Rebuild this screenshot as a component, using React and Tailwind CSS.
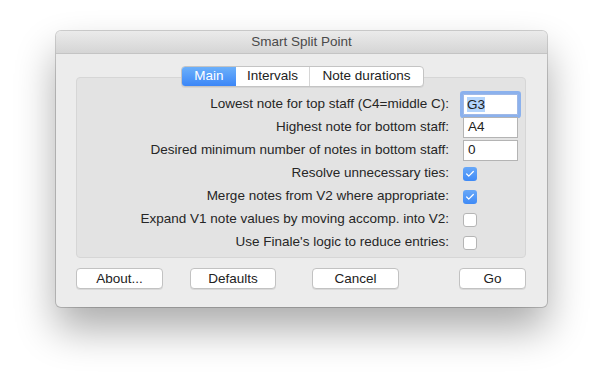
import { Check } from 'lucide-react'

const font = { fontFamily: '"Liberation Sans", Arial, sans-serif' }

const TextRow = ({ label, value, focused }) => (
  <div className="flex items-center h-[23px]">
    <div className="w-[386px] text-right pr-[14px] text-[13.5px] text-[#262626] whitespace-nowrap">{label}</div>
    {focused ? (
      <div className="w-[55px] h-[21px] bg-white border border-[#9fb8e6] rounded-[1px] shadow-[0_0_0_3px_rgba(110,160,240,0.75)] flex items-center px-[3px]">
        <span className="text-[13.5px] text-[#222] bg-[#b3d4fc] leading-[15px]">{value}</span>
      </div>
    ) : (
      <div className="w-[55px] h-[21px] bg-white border border-[#b4b4b4] flex items-center px-[4px] text-[13.5px] text-[#222]">
        {value}
      </div>
    )}
  </div>
)

const CheckRow = ({ label, checked }) => (
  <div className="flex items-center h-[23px]">
    <div className="w-[386px] text-right pr-[14px] text-[13.5px] text-[#262626] whitespace-nowrap">{label}</div>
    {checked ? (
      <div className="w-[14px] h-[14px] rounded-[3px] bg-gradient-to-b from-[#68a8f8] to-[#3f8af6] flex items-center justify-center">
        <Check className="w-[10px] h-[10px] text-white" strokeWidth={3} />
      </div>
    ) : (
      <div className="w-[14px] h-[14px] rounded-[3px] bg-white border border-[#b5b5b5]" />
    )}
  </div>
)

const Button = ({ children, width }) => (
  <button className={`${width} h-[21px] bg-white border border-[#c2c2c2] rounded-[4px] shadow-[0_1px_0_rgba(0,0,0,0.08)] text-[13.5px] text-[#222] leading-none`}>
    {children}
  </button>
)

export default function App() {
  return (
    <div className="w-[603px] h-[388px] bg-white pt-[31px] flex justify-center" style={font}>
      <div className="w-[491px] h-[276px] bg-[#ececec] rounded-[5px] shadow-[0_0_0_1px_rgba(0,0,0,0.18),0_22px_40px_rgba(0,0,0,0.33)] flex flex-col overflow-hidden">
        {/* Title bar */}
        <div className="h-[23px] bg-gradient-to-b from-[#ebebeb] to-[#d5d5d5] border-b border-[#c4c4c4] flex items-center justify-center text-[13.5px] text-[#4a4a4a]">
          Smart Split Point
        </div>

        <div className="flex flex-col px-[20px] pr-[21px] pt-[12px]">
          {/* Tabs */}
          <div className="flex justify-center relative z-10 mb-[-10px] pl-[3px]">
            <div className="flex h-[21px] rounded-[4px] border border-[#c4c4c4] bg-white shadow-[0_1px_0_rgba(0,0,0,0.06)] overflow-hidden text-[13.5px]">
              <div className="w-[54px] bg-gradient-to-b from-[#6cb0fa] to-[#3c86f7] text-white flex items-center justify-center">Main</div>
              <div className="w-[74px] border-r border-[#d6d6d6] flex items-center justify-center text-[#222]">Intervals</div>
              <div className="w-[113px] flex items-center justify-center text-[#222]">Note durations</div>
            </div>
          </div>

          {/* Tab box */}
          <div className="h-[181px] bg-[#e3e3e3] border border-[#d6d6d6] rounded-[4px] pt-[15px]">
            <TextRow label="Lowest note for top staff (C4=middle C):" value="G3" focused />
            <TextRow label="Highest note for bottom staff:" value="A4" />
            <TextRow label="Desired minimum number of notes in bottom staff:" value="0" />
            <CheckRow label="Resolve unnecessary ties:" checked />
            <CheckRow label="Merge notes from V2 where appropriate:" checked />
            <CheckRow label="Expand V1 note values by moving accomp. into V2:" />
            <CheckRow label="Use Finale's logic to reduce entries:" />
          </div>

          {/* Buttons */}
          <div className="flex items-center mt-[10px]">
            <Button width="w-[87px]">About...</Button>
            <div className="w-[27px]" />
            <Button width="w-[86px]">Defaults</Button>
            <div className="w-[36px]" />
            <Button width="w-[87px]">Cancel</Button>
            <div className="flex-1" />
            <Button width="w-[67px]">Go</Button>
          </div>
        </div>
      </div>
    </div>
  )
}
